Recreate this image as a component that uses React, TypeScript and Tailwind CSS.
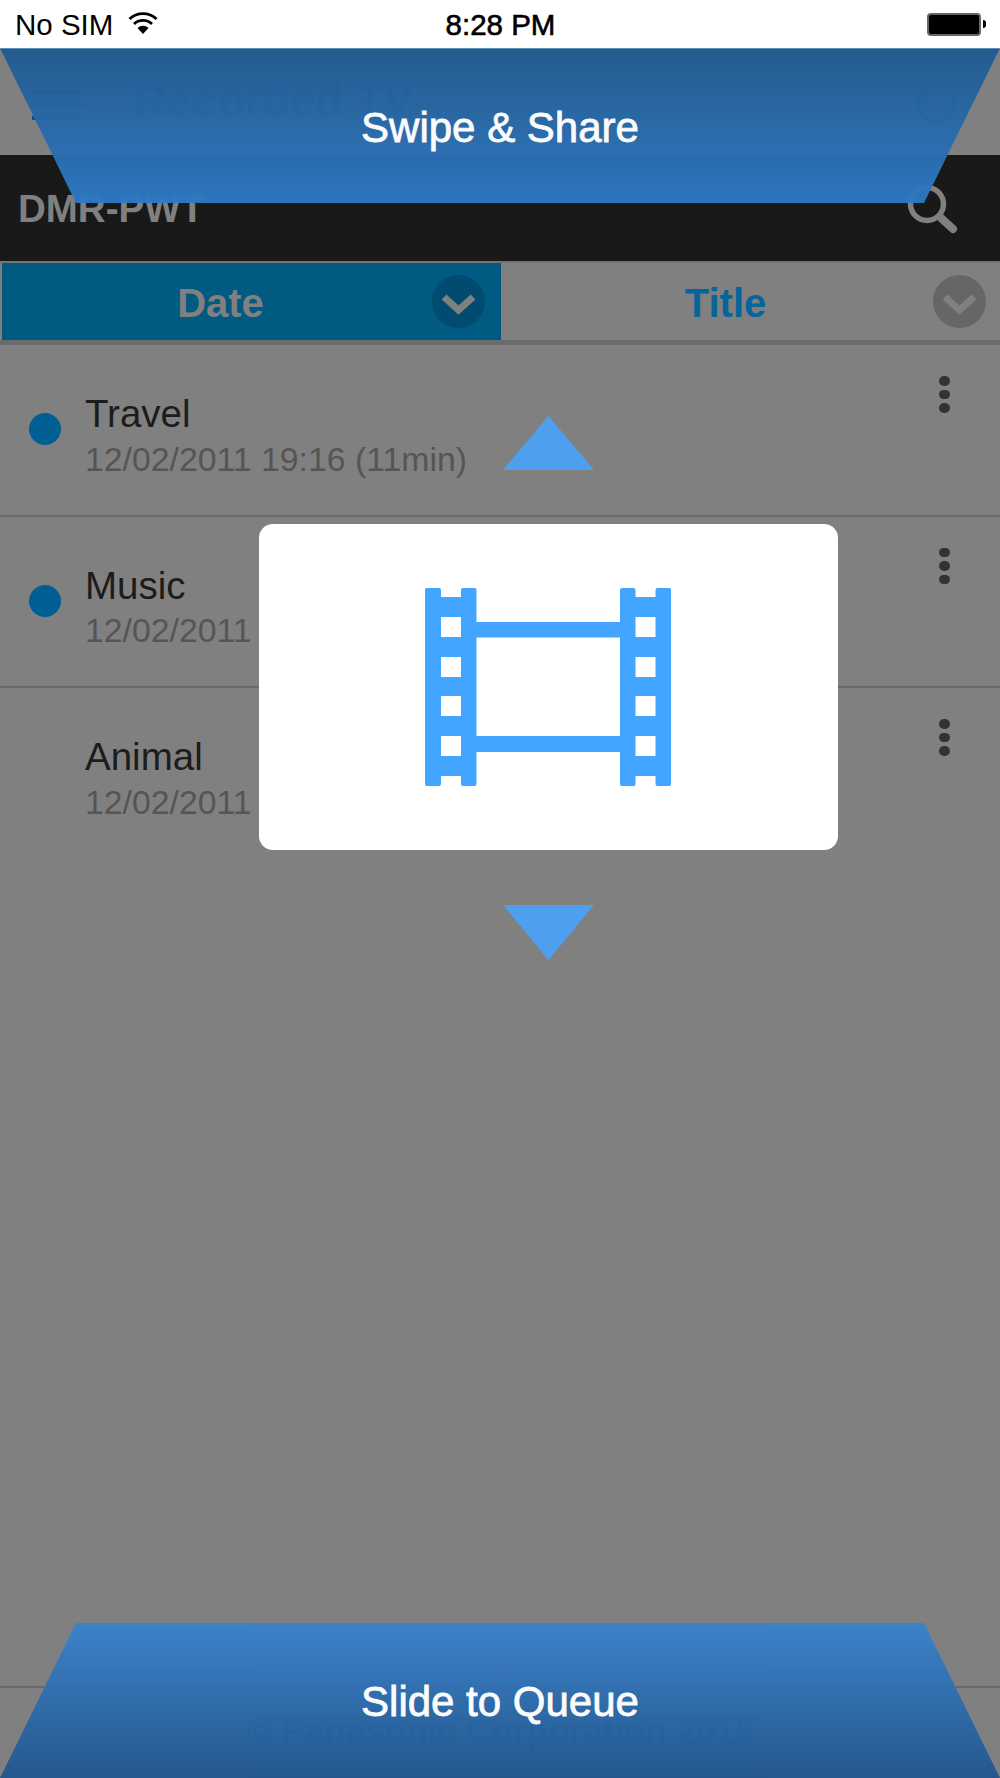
import React from 'react';

const Chevron = () => (
  <svg className="w-full h-full" viewBox="0 0 53 53" fill="none">
    <polyline points="12,22 26.5,35 41,22" stroke="#808080" strokeWidth={7} />
  </svg>
);

const Row = ({ title, date, dot, line }: { title: string; date: string; dot?: boolean; line?: boolean }) => (
  <div className={`flex items-start h-[171.5px] pl-[28.500px] pr-[50px] ${line ? 'border-b-2 border-[#6a6a6a]' : ''}`}>
    <div className={`w-[32px] h-[32px] mt-[68px] rounded-full shrink-0 ${dot ? 'bg-[#005f92]' : ''}`} />
    <div className="ml-[24.500px] pt-[49px]">
      <div className="text-[38.500px] leading-[40px] text-[#1c1c1c]">{title}</div>
      <div className="mt-[4.500px] text-[33.800px] leading-[40px] text-[#555555]">{date}</div>
    </div>
    {/* Kebab */}
    <div className="ml-auto mt-[31px] flex flex-col gap-[4px]">
      <div className="w-[11px] h-[9.500px] rounded-full bg-[#333333]" />
      <div className="w-[11px] h-[9.500px] rounded-full bg-[#333333]" />
      <div className="w-[11px] h-[9.500px] rounded-full bg-[#333333]" />
    </div>
  </div>
);

export default function App() {
  return (
    <div className="relative w-[1000px] h-[1778px] overflow-hidden bg-[#808080] flex flex-col font-['Liberation_Sans',Arial,sans-serif]">
      {/* Status bar */}
      <div className="h-12 shrink-0 grid grid-cols-3 items-center bg-white pl-[15px] pr-[14px] pt-[1px] text-black text-[29.500px] leading-[48px]">
        <div className="flex items-center gap-[15px]">
          <span>No SIM</span>
          <svg className="w-[30px] h-[22px] -mt-[4px]" viewBox="0 0 30 22" fill="none">
            <path d="M1.5 7 A19.5 19.5 0 0 1 28.5 7" stroke="#000" strokeWidth={2.8} />
            <path d="M6 12 A13 13 0 0 1 24 12" stroke="#000" strokeWidth={2.8} />
            <path d="M15 22 L9.5 16 A8 8 0 0 1 20.5 16 Z" fill="#000" />
          </svg>
        </div>
        <div className="text-center [-webkit-text-stroke:0.6px_black]">8:28 PM</div>
        <div className="flex items-center justify-end">
          <div className="w-[54px] h-[23px] -mt-[2px] rounded-[4px] border-2 border-[#666666] bg-black" />
          <div className="w-[3px] h-[8px] ml-[2px] -mt-[2px] rounded-r-full bg-black" />
        </div>
      </div>

      {/* Title bar */}
      <div className="h-[107px] shrink-0 flex items-start text-[#0c4e96]">
        <div className="mt-[42px] ml-[32px] w-[50px] flex flex-col gap-[9px]">
          <div className="h-[4px] bg-[#0c4e96]" />
          <div className="h-[4px] bg-[#0c4e96]" />
          <div className="h-[4px] bg-[#0c4e96]" />
        </div>
        <div className="ml-[51px] pt-[28px] text-[45.500px] leading-[50px] font-bold">Recorded TV</div>
        <svg className="ml-auto mt-[35px] mr-[44px] w-[40px] h-[40px]" viewBox="0 0 40 40" fill="none">
          <path d="M36 12 A18 18 0 1 1 24 3" stroke="#0c4e96" strokeWidth={4} />
        </svg>
      </div>

      {/* Device bar */}
      <div className="h-[106px] shrink-0 flex items-start bg-[#191919] pl-[18px] pr-[40px]">
        <div className="pt-[32px] text-[38.500px] leading-[44px] font-bold text-[#808080]">DMR-PWT</div>
        <svg className="ml-auto mt-[27px] w-[54px] h-[54px]" viewBox="0 0 54 54" fill="none">
          <circle cx="21" cy="22" r="16.5" stroke="#808080" strokeWidth={5.5} />
          <line x1="35" y1="36" x2="47" y2="47" stroke="#808080" strokeWidth={8} strokeLinecap="round" />
        </svg>
      </div>

      {/* Sort tabs */}
      <div className="h-[84px] shrink-0 flex border-t-2 border-b-[5px] border-t-[#747474] border-b-[#6b6b6b]">
        <div className="relative w-[499px] ml-[2px] bg-[#005a82] flex items-center justify-center pt-[2px] pr-[62px]">
          <span className="text-[40px] font-bold text-[#808080]">Date</span>
          <div className="absolute right-[16.500px] top-[12px] w-[53px] h-[53px] rounded-full bg-[#014a70]">
            <Chevron />
          </div>
        </div>
        <div className="relative w-[499px] flex items-center justify-center pt-[2px] pr-[50px]">
          <span className="text-[40px] font-bold text-[#06659a]">Title</span>
          <div className="absolute right-[14.500px] top-[12px] w-[53px] h-[53px] rounded-full bg-[#666666]">
            <Chevron />
          </div>
        </div>
      </div>

      {/* List */}
      <div className="flex-1">
        <Row title="Travel" date="12/02/2011 19:16 (11min)" dot line />
        <Row title="Music" date="12/02/2011 19:16 (11min)" dot line />
        <Row title="Animal" date="12/02/2011 19:16 (11min)" />
      </div>

      {/* Footer */}
      <div className="h-[92px] shrink-0 border-t-2 border-[#6a6a6a] pt-[23px] text-center text-[35px] leading-[40px] font-bold text-[#0c4e96]">
        © Panasonic Corporation 2015
      </div>

      {/* Swipe target banners */}
      <div className="absolute left-0 right-0 top-12 h-[155px] flex items-center justify-center pt-[3px] border-t border-[#5f8fbd] bg-gradient-to-b from-[#225a90] to-[#2f7ac4] opacity-[.97] [clip-path:polygon(0_0,100%_0,92.4%_100%,7.6%_100%)]">
        <span className="text-[42px] leading-[40px] text-white [-webkit-text-stroke:0.8px_white]">Swipe &amp; Share</span>
      </div>
      <div className="absolute left-0 right-0 bottom-0 h-[155px] flex items-center justify-center pt-[3px] bg-gradient-to-b from-[#3a82cc] to-[#22578e] opacity-[.97] [clip-path:polygon(7.6%_0,92.4%_0,100%_100%,0_100%)]">
        <span className="text-[42px] leading-[40px] text-white [-webkit-text-stroke:0.8px_white]">Slide to Queue</span>
      </div>

      {/* Drag item with arrows */}
      <div className="absolute left-[259px] top-[416px] w-[579px] flex flex-col items-center">
        <svg className="w-[91px] h-[54px]" viewBox="0 0 91 54">
          <polygon points="45.5,0 91,54 0,54" fill="#4f9fef" />
        </svg>
        <div className="mt-[54px] w-[579px] h-[326px] rounded-[14px] bg-white flex items-center justify-center">
          <svg className="-ml-[1px] w-[246px] h-[198px]" viewBox="0 0 246 198" fillRule="evenodd">
            <path
              fill="#42a5ff"
              d="M2 0H14a2 2 0 0 1 2 2V9H36V2a2 2 0 0 1 2-2H49.5a2 2 0 0 1 2 2V196a2 2 0 0 1-2 2H38a2 2 0 0 1-2-2V188H16V196a2 2 0 0 1-2 2H2a2 2 0 0 1-2-2V2a2 2 0 0 1 2-2Z
              M16 29V49H36V29Z M16 69V89H36V69Z M16 108V128H36V108Z M16 148V168H36V148Z"
            />
            <path
              fill="#42a5ff"
              d="M197 0H208.500a2 2 0 0 1 2 2V9H230.500V2a2 2 0 0 1 2-2H244a2 2 0 0 1 2 2V196a2 2 0 0 1-2 2H232.500a2 2 0 0 1-2-2V188H210.500V196a2 2 0 0 1-2 2H197a2 2 0 0 1-2-2V2a2 2 0 0 1 2-2Z
              M210.500 29V49H230.500V29Z M210.500 69V89H230.500V69Z M210.500 108V128H230.500V108Z M210.500 148V168H230.500V148Z"
            />
            <rect x="51" y="34" width="144" height="15.500" fill="#42a5ff" />
            <rect x="51" y="148" width="144" height="16" fill="#42a5ff" />
          </svg>
        </div>
        <svg className="mt-[55px] w-[91px] h-[55px]" viewBox="0 0 91 55">
          <polygon points="0,0 91,0 45.5,55" fill="#4f9fef" />
        </svg>
      </div>
    </div>
  );
}
